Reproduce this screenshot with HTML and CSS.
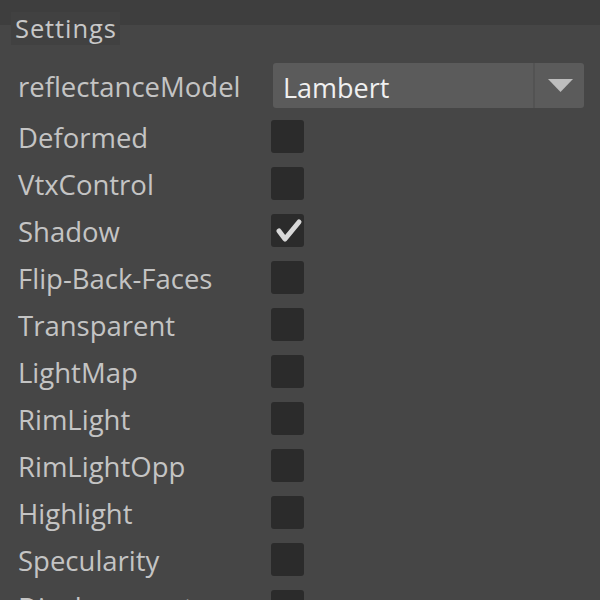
FILE: index.html
```html
<!DOCTYPE html>
<html>
<head>
<meta charset="utf-8">
<link rel="stylesheet" href="styles.css">
</head>
<body>
<div class="panel">
  <div class="header"><span class="title">Settings</span></div>
  <div class="rows">
    <div class="row first">
      <span class="label">reflectanceModel</span>
      <div class="dropdown">
        <span class="value">Lambert</span>
        <span class="arrow"><svg width="25" height="13" viewBox="0 0 25 13"><polygon points="0,0 25,0 12.5,13" fill="#bdbdbd"/></svg></span>
      </div>
    </div>
    <div class="row"><span class="label">Deformed</span><span class="cb"></span></div>
    <div class="row"><span class="label">VtxControl</span><span class="cb"></span></div>
    <div class="row"><span class="label">Shadow</span><span class="cb"><svg width="33" height="33" viewBox="0 0 33 33"><polyline points="8,17 14,25 28,8" fill="none" stroke="#d8d8d8" stroke-width="5" stroke-linejoin="round" stroke-linecap="round"/></svg></span></div>
    <div class="row"><span class="label">Flip-Back-Faces</span><span class="cb"></span></div>
    <div class="row"><span class="label">Transparent</span><span class="cb"></span></div>
    <div class="row"><span class="label">LightMap</span><span class="cb"></span></div>
    <div class="row"><span class="label">RimLight</span><span class="cb"></span></div>
    <div class="row"><span class="label">RimLightOpp</span><span class="cb"></span></div>
    <div class="row"><span class="label">Highlight</span><span class="cb"></span></div>
    <div class="row"><span class="label">Specularity</span><span class="cb"></span></div>
    <div class="row"><span class="label">Displacement</span><span class="cb"></span></div>
  </div>
</div>
</body>
</html>
```
FILE: styles.css
```css
html, body {
  margin: 0;
  padding: 0;
  background: #464646;
  overflow: hidden;
}
body {
  width: 600px;
  height: 600px;
  font-family: "Open Sans", "Noto Sans", sans-serif;
}
.panel {
  width: 600px;
  height: 600px;
  background: linear-gradient(#3e3e3e 0, #3e3e3e 25px, #464646 25px);
}
.header {
  height: 62px;
  padding: 12px 0 0 11px;
  box-sizing: border-box;
}
.title {
  display: inline-block;
  background: #414141;
  color: #c8c8c8;
  font-size: 25.5px;
  letter-spacing: 0.9px;
  line-height: 33px;
  padding: 0 3px 0 4px;
}
.rows {
  display: flex;
  flex-direction: column;
}
.row {
  height: 47px;
  display: grid;
  grid-template-columns: 253px 1fr;
  align-items: center;
  padding-left: 18px;
}
.row.first {
  margin-bottom: 4px;
  grid-template-columns: 255px 311px;
}
.label {
  color: #c4c4c4;
  font-size: 27.5px;
  line-height: 32px;
  padding-top: 3px;
  white-space: nowrap;
}
.cb {
  width: 33px;
  height: 33px;
  background: #2b2b2b;
  border-radius: 3px;
  display: block;
}
.cb svg { display: block; }
.dropdown {
  height: 45px;
  display: flex;
  background: #5b5b5b;
  border-radius: 3px;
}
.value {
  flex: 1;
  color: #f0f0f0;
  font-size: 27px;
  line-height: 45px;
  padding-top: 2px;
  box-sizing: border-box;
  padding-left: 10px;
  border-right: 2px solid #535353;
}
.arrow {
  width: 49px;
  display: flex;
  align-items: center;
  justify-content: center;
}
.arrow svg { display: block; margin-left: 2px; }
```
